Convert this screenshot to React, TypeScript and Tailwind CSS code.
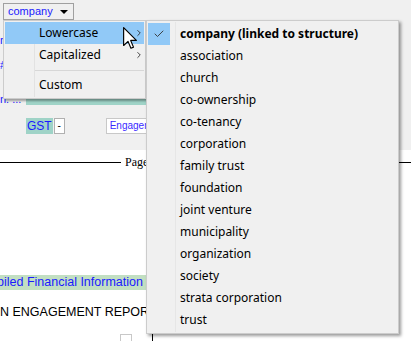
import { Check, ChevronRight } from "lucide-react";

const subItems = [
  "association",
  "church",
  "co-ownership",
  "co-tenancy",
  "corporation",
  "family trust",
  "foundation",
  "joint venture",
  "municipality",
  "organization",
  "society",
  "strata corporation",
  "trust",
];

const menuFont = { fontFamily: '"Noto Sans", "Open Sans", sans-serif' };

const Cursor = () => (
  <svg width="14" height="22" viewBox="0 0 12 19" className="absolute left-[123px] top-[27px]">
    <path d="M0.5 0.5 L0.5 16 L4.3 12.4 L6.8 18.3 L9 17.4 L6.6 11.6 L11.5 11.6 Z" fill="#fff" stroke="#000" strokeWidth="1" strokeLinejoin="round" />
  </svg>
);

const App = () => {
  return (
    <div className="relative w-[411px] h-[341px] overflow-hidden bg-white" style={{ fontFamily: '"Liberation Sans", Arial, sans-serif' }}>
      {/* background app */}
      <div className="h-[150px] bg-[#f0f0f0] flex flex-col">
        <div className="pl-[3px] pt-[3px]">
          <div className="w-[71px] h-[17px] border border-[#a0a0a0] bg-[#f0f0f0] flex items-center justify-between pl-[4px] pr-[5px]">
            <span className="text-[11px] text-[#1a1aff] leading-none">company</span>
            <span className="w-0 h-0 border-l-[4px] border-r-[4px] border-t-[4px] border-l-transparent border-r-transparent border-t-black" />
          </div>
        </div>
        <div className="flex flex-col text-[11px] text-[#1a1aff] leading-none">
          <span className="mt-[15px]">r</span>
          <span className="mt-[14px]">#</span>
          <div className="mt-[17px] flex items-end">
            <span className="w-[26px]">n. ...</span>
            <div className="w-[120px] h-[17px] bg-[#9fd3c7]" />
          </div>
        </div>
        <div className="flex items-center mt-[13px] pl-[26px]">
          <span className="h-[16px] px-[1px] bg-[#9fd3c7] text-[12px] text-[#1a1aff] leading-[16px]">GST</span>
          <span className="ml-[1px] w-[11px] h-[16px] border border-[#b0b0b0] bg-white flex items-center justify-center text-[10px] leading-none">-</span>
          <span className="ml-[41px] h-[16px] pl-[3px] pr-[4px] border border-[#c8c8c8] bg-white text-[10px] text-[#3a2aff] leading-[14px]">Engagement</span>
        </div>
      </div>
      <div className="flex items-center mt-[5px] h-[14px]">
        <div className="w-[121px] h-px bg-black" />
        <span className="ml-[4px] text-[12px] text-black" style={{ fontFamily: '"Liberation Serif", serif' }}>Page</span>
        <div className="flex-1 h-px bg-black ml-[4px]" />
      </div>
      <div className="mt-[106px] h-[15px] w-[170px] bg-[#c2dfc2] text-[12.5px] text-[#1a1aff] leading-[15px] whitespace-nowrap -ml-[3px]">piled Financial Information</div>
      <div className="mt-[15px] text-[12.5px] text-black leading-[15px] whitespace-nowrap">N ENGAGEMENT REPORT</div>
      <div className="flex mt-[14px] ml-[120px] gap-[4px]">
        <div className="w-[12px] h-[8px] border-t border-l border-r border-[#c8c8c8]" />
        <div className="w-px h-[8px] bg-black ml-[16px]" />
      </div>

      {/* main menu */}
      <div className="absolute left-[3px] top-[20px] w-[143px] h-[79px] bg-[#f0f0f0] border border-[#cccccc] shadow-[2px_2px_2px_rgba(0,0,0,0.35)] pt-[1px] px-[1px]" style={menuFont}>
        <div className="absolute left-[30px] top-[1px] bottom-[1px] w-px bg-[#e2e2e2]" />
        <div className="relative h-[22px] bg-[#91c9f7] flex items-center pl-[34px] text-[12px] text-black">
          Lowercase
          <ChevronRight className="absolute right-[0px] w-[10px] h-[10px] text-[#222]" strokeWidth={2} />
        </div>
        <div className="relative h-[22px] flex items-center pl-[34px] text-[12px] text-black">
          Capitalized
          <ChevronRight className="absolute right-[0px] w-[10px] h-[10px] text-[#222]" strokeWidth={2} />
        </div>
        <div className="h-[8px] flex items-center pl-[30px] pt-[1px]">
          <div className="w-full h-px bg-[#d7d7d7]" />
        </div>
        <div className="relative h-[22px] flex items-center pl-[34px] text-[12px] text-black">Custom</div>
      </div>

      <Cursor />

      {/* submenu */}
      <div className="absolute left-[146px] top-[20px] w-[253px] h-[314px] bg-[#f0f0f0] border border-[#cccccc] shadow-[2px_2px_3px_rgba(0,0,0,0.4)] pt-[2px] px-[1px]" style={menuFont}>
        <div className="absolute left-[28px] top-[1px] bottom-[1px] w-px bg-[#e6e6e6]" />
        <div className="relative h-[22px] flex items-center text-[12px] text-black">
          <div className="w-[22px] h-[22px] bg-[#91c9f7] flex items-center justify-center">
            <Check className="w-[12px] h-[12px] text-[#333]" strokeWidth={1.8} />
          </div>
          <span className="ml-[10px] font-bold">company (linked to structure)</span>
        </div>
        {subItems.map((item) => (
          <div key={item} className="relative h-[22px] flex items-center pl-[32px] text-[12px] text-black">
            {item}
          </div>
        ))}
      </div>
    </div>
  );
};

export default App;
